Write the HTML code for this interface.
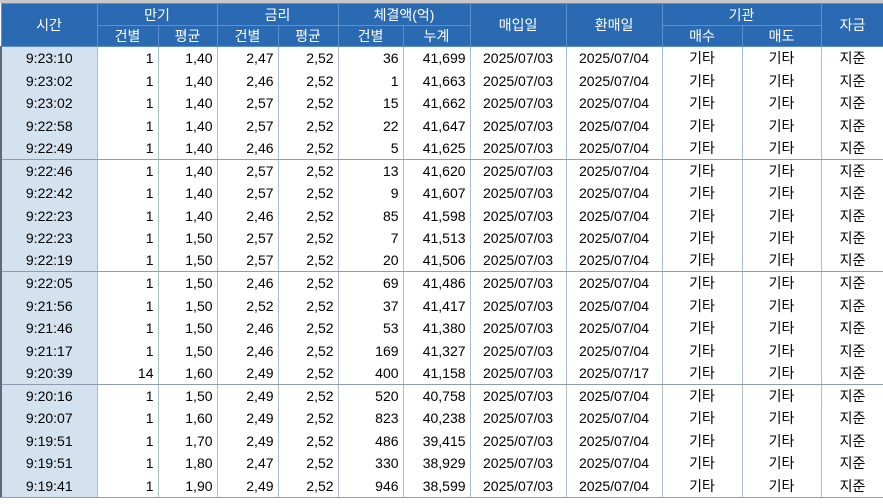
<!DOCTYPE html><html><head><meta charset="utf-8"><style>
body{margin:0;width:883px;height:503px;overflow:hidden;background:#fff;font-family:"Liberation Sans","Noto Sans CJK KR",sans-serif}
.top{height:3px;background:#c8c8c8}
table{border-collapse:collapse;table-layout:fixed;width:883px;font-size:14px}
th{background:#2a6ab2;color:#fff;font-weight:normal;border:1px solid #5d90cc;padding:0;line-height:1}
td{border-left:1px solid #a9bdd2;border-right:1px solid #a9bdd2;padding:0 4px;text-align:right;color:#000;white-space:nowrap;overflow:hidden;line-height:16px}
td:first-child{background:#d4e1ee;text-align:center;border-left:2px solid #5a6a7c}
td.c{text-align:center}
tr.g td{border-bottom:1px solid #8e9db0}
tr.o{height:23px}tr.e{height:22px}
tr.o td{height:23px;box-sizing:border-box}tr.e td{height:22px;box-sizing:border-box}
.bot{height:6px;border-top:1px solid #8e9db0;background:#fff}
</style></head><body><div class="top"></div>
<table>
<colgroup><col style="width:96px"><col style="width:61px"><col style="width:59px"><col style="width:61px"><col style="width:60px"><col style="width:65px"><col style="width:67px"><col style="width:96px"><col style="width:96px"><col style="width:80px"><col style="width:79px"><col style="width:63px"></colgroup>
<tr style="height:22px"><th rowspan="2">시간</th><th colspan="2">만기</th><th colspan="2">금리</th><th colspan="2">체결액(억)</th><th rowspan="2">매입일</th><th rowspan="2">환매일</th><th colspan="2">기관</th><th rowspan="2">자금</th></tr>
<tr style="height:21px"><th>건별</th><th>평균</th><th>건별</th><th>평균</th><th>건별</th><th>누계</th><th>매수</th><th>매도</th></tr>
<tr class="o"><td>9:23:10</td><td>1</td><td>1,40</td><td>2,47</td><td>2,52</td><td>36</td><td>41,699</td><td class="c">2025/07/03</td><td class="c">2025/07/04</td><td class="c">기타</td><td class="c">기타</td><td class="c">지준</td></tr>
<tr class="e"><td>9:23:02</td><td>1</td><td>1,40</td><td>2,46</td><td>2,52</td><td>1</td><td>41,663</td><td class="c">2025/07/03</td><td class="c">2025/07/04</td><td class="c">기타</td><td class="c">기타</td><td class="c">지준</td></tr>
<tr class="o"><td>9:23:02</td><td>1</td><td>1,40</td><td>2,57</td><td>2,52</td><td>15</td><td>41,662</td><td class="c">2025/07/03</td><td class="c">2025/07/04</td><td class="c">기타</td><td class="c">기타</td><td class="c">지준</td></tr>
<tr class="e"><td>9:22:58</td><td>1</td><td>1,40</td><td>2,57</td><td>2,52</td><td>22</td><td>41,647</td><td class="c">2025/07/03</td><td class="c">2025/07/04</td><td class="c">기타</td><td class="c">기타</td><td class="c">지준</td></tr>
<tr class="o g"><td>9:22:49</td><td>1</td><td>1,40</td><td>2,46</td><td>2,52</td><td>5</td><td>41,625</td><td class="c">2025/07/03</td><td class="c">2025/07/04</td><td class="c">기타</td><td class="c">기타</td><td class="c">지준</td></tr>
<tr class="e"><td>9:22:46</td><td>1</td><td>1,40</td><td>2,57</td><td>2,52</td><td>13</td><td>41,620</td><td class="c">2025/07/03</td><td class="c">2025/07/04</td><td class="c">기타</td><td class="c">기타</td><td class="c">지준</td></tr>
<tr class="o"><td>9:22:42</td><td>1</td><td>1,40</td><td>2,57</td><td>2,52</td><td>9</td><td>41,607</td><td class="c">2025/07/03</td><td class="c">2025/07/04</td><td class="c">기타</td><td class="c">기타</td><td class="c">지준</td></tr>
<tr class="e"><td>9:22:23</td><td>1</td><td>1,40</td><td>2,46</td><td>2,52</td><td>85</td><td>41,598</td><td class="c">2025/07/03</td><td class="c">2025/07/04</td><td class="c">기타</td><td class="c">기타</td><td class="c">지준</td></tr>
<tr class="o"><td>9:22:23</td><td>1</td><td>1,50</td><td>2,57</td><td>2,52</td><td>7</td><td>41,513</td><td class="c">2025/07/03</td><td class="c">2025/07/04</td><td class="c">기타</td><td class="c">기타</td><td class="c">지준</td></tr>
<tr class="e g"><td>9:22:19</td><td>1</td><td>1,50</td><td>2,57</td><td>2,52</td><td>20</td><td>41,506</td><td class="c">2025/07/03</td><td class="c">2025/07/04</td><td class="c">기타</td><td class="c">기타</td><td class="c">지준</td></tr>
<tr class="o"><td>9:22:05</td><td>1</td><td>1,50</td><td>2,46</td><td>2,52</td><td>69</td><td>41,486</td><td class="c">2025/07/03</td><td class="c">2025/07/04</td><td class="c">기타</td><td class="c">기타</td><td class="c">지준</td></tr>
<tr class="e"><td>9:21:56</td><td>1</td><td>1,50</td><td>2,52</td><td>2,52</td><td>37</td><td>41,417</td><td class="c">2025/07/03</td><td class="c">2025/07/04</td><td class="c">기타</td><td class="c">기타</td><td class="c">지준</td></tr>
<tr class="o"><td>9:21:46</td><td>1</td><td>1,50</td><td>2,46</td><td>2,52</td><td>53</td><td>41,380</td><td class="c">2025/07/03</td><td class="c">2025/07/04</td><td class="c">기타</td><td class="c">기타</td><td class="c">지준</td></tr>
<tr class="e"><td>9:21:17</td><td>1</td><td>1,50</td><td>2,46</td><td>2,52</td><td>169</td><td>41,327</td><td class="c">2025/07/03</td><td class="c">2025/07/04</td><td class="c">기타</td><td class="c">기타</td><td class="c">지준</td></tr>
<tr class="o g"><td>9:20:39</td><td>14</td><td>1,60</td><td>2,49</td><td>2,52</td><td>400</td><td>41,158</td><td class="c">2025/07/03</td><td class="c">2025/07/17</td><td class="c">기타</td><td class="c">기타</td><td class="c">지준</td></tr>
<tr class="e"><td>9:20:16</td><td>1</td><td>1,50</td><td>2,49</td><td>2,52</td><td>520</td><td>40,758</td><td class="c">2025/07/03</td><td class="c">2025/07/04</td><td class="c">기타</td><td class="c">기타</td><td class="c">지준</td></tr>
<tr class="o"><td>9:20:07</td><td>1</td><td>1,60</td><td>2,49</td><td>2,52</td><td>823</td><td>40,238</td><td class="c">2025/07/03</td><td class="c">2025/07/04</td><td class="c">기타</td><td class="c">기타</td><td class="c">지준</td></tr>
<tr class="e"><td>9:19:51</td><td>1</td><td>1,70</td><td>2,49</td><td>2,52</td><td>486</td><td>39,415</td><td class="c">2025/07/03</td><td class="c">2025/07/04</td><td class="c">기타</td><td class="c">기타</td><td class="c">지준</td></tr>
<tr class="o"><td>9:19:51</td><td>1</td><td>1,80</td><td>2,47</td><td>2,52</td><td>330</td><td>38,929</td><td class="c">2025/07/03</td><td class="c">2025/07/04</td><td class="c">기타</td><td class="c">기타</td><td class="c">지준</td></tr>
<tr class="e"><td>9:19:41</td><td>1</td><td>1,90</td><td>2,49</td><td>2,52</td><td>946</td><td>38,599</td><td class="c">2025/07/03</td><td class="c">2025/07/04</td><td class="c">기타</td><td class="c">기타</td><td class="c">지준</td></tr>
</table><div class="bot"></div></body></html>
